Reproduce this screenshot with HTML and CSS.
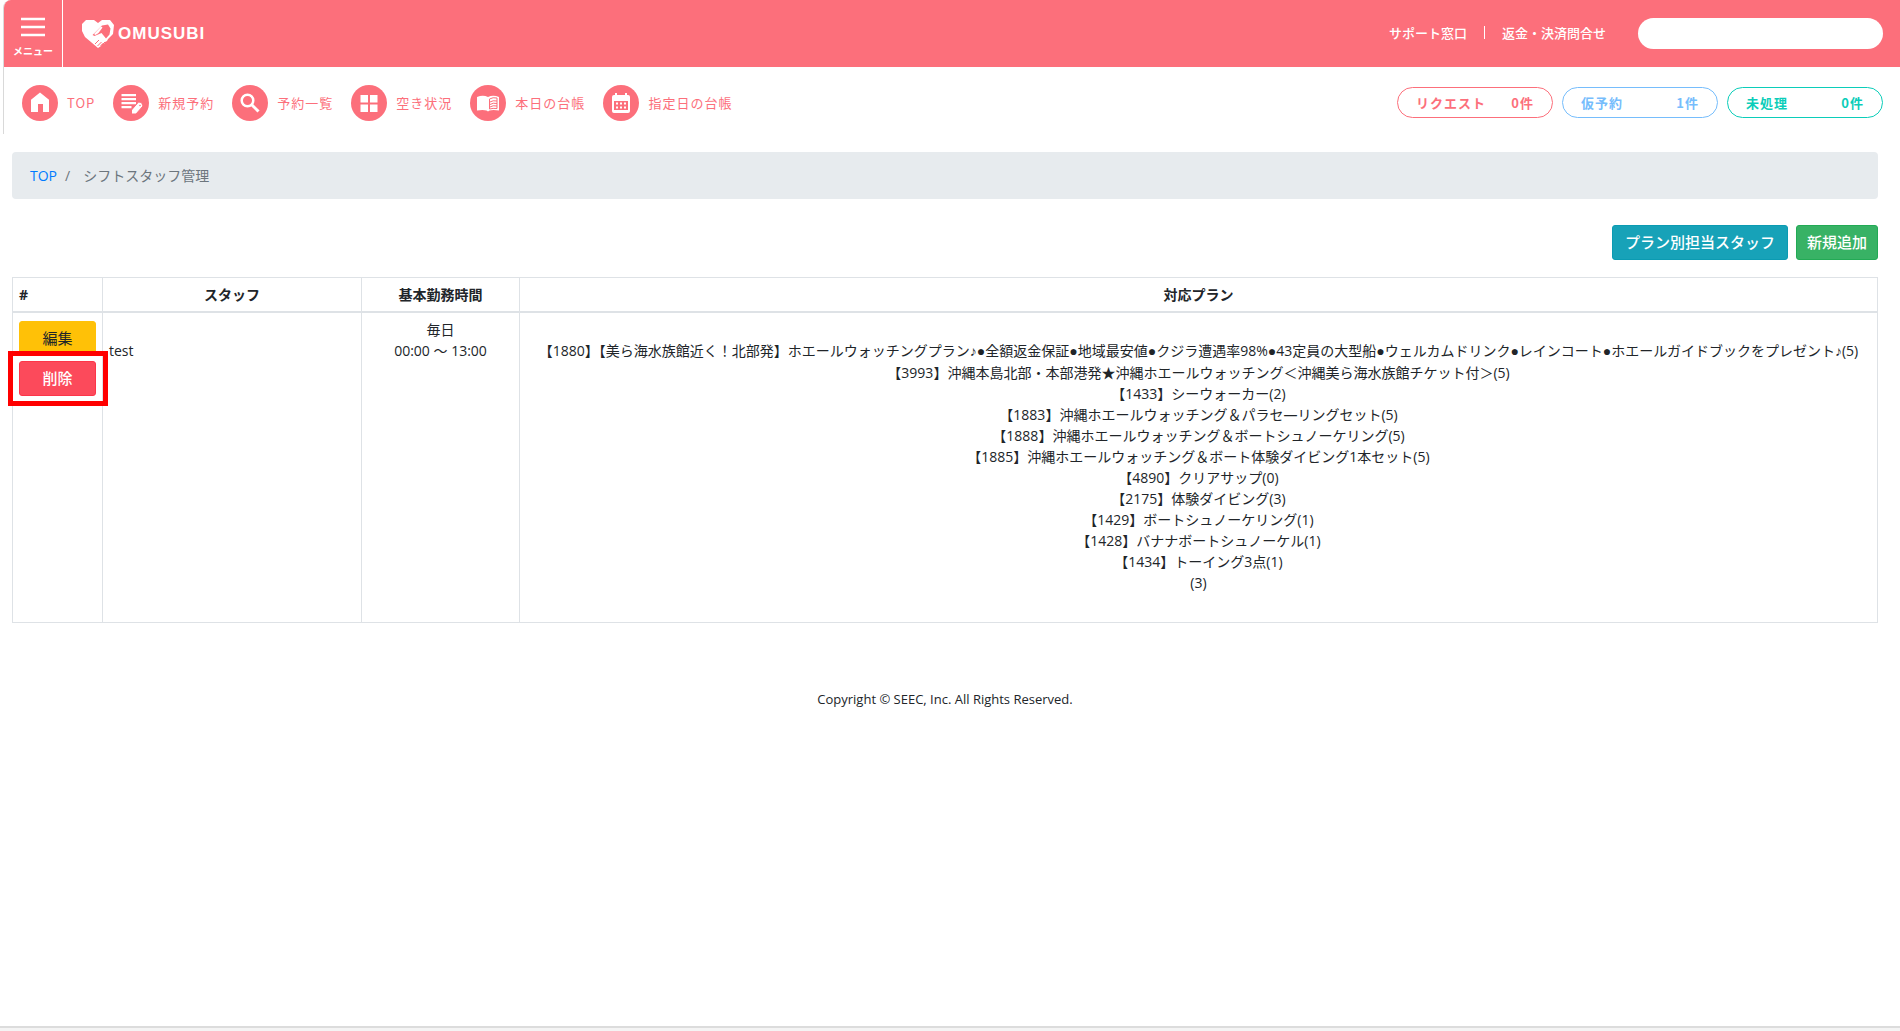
FILE: index.html
```html
<!DOCTYPE html>
<html lang="ja">
<head>
<meta charset="utf-8">
<title>シフトスタッフ管理 | OMUSUBI</title>
<link rel="stylesheet" href="styles.css">
</head>
<body>
<div class="top">
  <header class="header">
    <button class="menu" type="button">
      <svg class="menu-icon" width="24" height="20" viewBox="0 0 24 20" aria-hidden="true"><path d="M0 2h24M0 10h24M0 18h24" stroke="#fff" stroke-width="2.4"/></svg>
      <span>メニュー</span>
    </button>
    <a class="logo" href="#">
      <svg width="32" height="30" viewBox="0 0 32 30" aria-hidden="true">
        <path fill="#fff" d="M4 1l8 0 4 3 4-3 8 0 4 5-1 9-5 5-1 2-2 1-1 2-2 0-1 2-3 2L3 18 0 12 0 5z"/>
        <path fill="#fc6f7b" d="M20 6.500l6-1 2.500 4-1 6-3.500 4-4.500-5.500-3.500 1.500-3.500 1.500-2-1z"/>
        <path fill="#fff" d="M12 15l7-7.500 1.500 1-4 5.500-3 2z"/>
        <path fill="none" stroke="#fc6f7b" stroke-width="1" d="M13 25l4-4M15.500 27l4-4M18.500 27l3-3M21 25l2-2"/>
      </svg>
      <span>OMUSUBI</span>
    </a>
    <nav class="support">
      <a href="#">サポート窓口</a>
      <a href="#">返金・決済問合せ</a>
    </nav>
    <input class="search" type="search" aria-label="検索">
  </header>
  <div class="toolbar">
    <nav class="nav">
      <a href="#"><svg class="circle" viewBox="0 0 36 36" aria-hidden="true"><circle cx="18" cy="18" r="18"/><path class="w" d="M18 7.500l9 7.300V27h-6v-8h-5v8H9V14.800z"/></svg><span>TOP</span></a>
      <a href="#"><svg class="circle" viewBox="0 0 36 36" aria-hidden="true"><circle cx="18" cy="18" r="18"/><path class="w" d="M8.500 9h14.500v2.200H8.500zM8.500 13h14.500v2.200H8.500zM8.500 17h14.500v2.200H8.500zM8.500 21h10v2.200H8.500z"/><path class="w" stroke="#fc6f7b" d="M18.500 25l7-8 3 .5 1.500 3.500-7 8h-4.500z"/><circle cx="27" cy="20.500" r=".8"/></svg><span>新規予約</span></a>
      <a href="#"><svg class="circle" viewBox="0 0 36 36" aria-hidden="true"><circle cx="18" cy="18" r="18"/><g fill="none" stroke="#fff"><circle cx="15.500" cy="15.500" r="5.800" stroke-width="2.500" fill="none"/><path d="M19.500 19.500l7 7" stroke-width="3"/></g></svg><span>予約一覧</span></a>
      <a href="#"><svg class="circle" viewBox="0 0 36 36" aria-hidden="true"><circle cx="18" cy="18" r="18"/><path class="w" d="M9.500 10h7.500v7.500H9.500zM19 10h7.500v7.500H19zM9.500 19.500h7.500v7.500H9.500zM19 19.500h7.500v7.500H19z"/></svg><span>空き状況</span></a>
      <a href="#"><svg class="circle" viewBox="0 0 36 36" aria-hidden="true"><circle cx="18" cy="18" r="18"/><path class="w" d="M7 12q6-2.500 11 0 5-2.500 11 0v13.500q-6-1-9.500 0l-1.500 1-1.500-1q-3.500-1-9.500 0z"/><path fill="none" stroke="#fc6f7b" d="M19.500 14q3.500-2 7.500-1v10.500q-4-.5-7.500 .5zM20 17q3-2 7-1M20 19.500q3-2 7-1M20 22q3-2 7-1"/></svg><span>本日の台帳</span></a>
      <a href="#"><svg class="circle" viewBox="0 0 36 36" aria-hidden="true"><circle cx="18" cy="18" r="18"/><path class="w" fill-rule="evenodd" d="M9 12q0-2 2-2h1V8h2v2h8V8h2v2h1q2 0 2 2v14q0 2-2 2H11q-2 0-2-2zM11 16v9h14v-9z"/><path class="w" d="M13 17.500h2v2h-2zM17 17.500h2v2h-2zM21 17.500h2v2h-2zM13 21.500h2v2h-2zM17 21.500h2v2h-2zM21 21.500h2v2h-2z"/></svg><span>指定日の台帳</span></a>
    </nav>
    <div class="counts">
      <a class="pill pill-request" href="#"><span>リクエスト</span><span>0件</span></a>
      <a class="pill pill-hold" href="#"><span>仮予約</span><span>1件</span></a>
      <a class="pill pill-open" href="#"><span>未処理</span><span>0件</span></a>
    </div>
  </div>
</div>
<main class="main">
  <nav class="breadcrumb"><a href="#">TOP</a><span>/</span><span>シフトスタッフ管理</span></nav>
  <div class="actions">
    <button class="btn btn-info" type="button">プラン別担当スタッフ</button>
    <button class="btn btn-success" type="button">新規追加</button>
  </div>
  <table class="staff">
    <colgroup><col class="col-ops"><col class="col-name"><col class="col-time"><col></colgroup>
    <thead><tr><th class="left">#</th><th>スタッフ</th><th>基本勤務時間</th><th>対応プラン</th></tr></thead>
    <tbody><tr>
      <td class="left">
        <div class="ops">
          <button class="btn btn-warning" type="button">編集</button>
          <div class="marked"><button class="btn btn-danger" type="button">削除</button></div>
        </div>
      </td>
      <td class="left"><br>test</td>
      <td>毎日<br>00:00 ～ 13:00</td>
      <td class="plans"><br>
        【1880】【美ら海水族館近く！北部発】ホエールウォッチングプラン<span class="sym">♪●</span>全額返金保証<span class="sym">●</span>地域最安値<span class="sym">●</span>クジラ遭遇率98%<span class="sym">●</span>43定員の大型船<span class="sym">●</span>ウェルカムドリンク<span class="sym">●</span>レインコート<span class="sym">●</span>ホエールガイドブックをプレゼント<span class="sym">♪</span>(5)<br>
        【3993】沖縄本島北部・本部港発★沖縄ホエールウォッチング＜沖縄美ら海水族館チケット付＞(5)<br>
        【1433】シーウォーカー(2)<br>
        【1883】沖縄ホエールウォッチング＆パラセ―リングセット(5)<br>
        【1888】沖縄ホエールウォッチング＆ボートシュノーケリング(5)<br>
        【1885】沖縄ホエールウォッチング＆ボート体験ダイビング1本セット(5)<br>
        【4890】クリアサップ(0)<br>
        【2175】体験ダイビング(3)<br>
        【1429】ボートシュノーケリング(1)<br>
        【1428】バナナボートシュノーケル(1)<br>
        【1434】トーイング3点(1)<br>
        (3)<br><br>
      </td>
    </tr></tbody>
  </table>
</main>
<footer class="footer">Copyright © SEEC, Inc. All Rights Reserved.</footer>
<div class="bottom-edge"></div>
</body>
</html>
```
FILE: styles.css
```css
*, *::before, *::after { box-sizing: border-box; }
body {
  margin: 0;
  min-height: 100vh;
  display: flex;
  flex-direction: column;
  background: #fff;
  color: #212529;
  font: 14px/21px "Open Sans", "Noto Sans CJK JP", sans-serif;
}
a { text-decoration: none; }
button { font-family: inherit; cursor: pointer; }

.top {
  margin-left: 3px;
  border-left: 1px solid #d9d9d9;
  border-top-left-radius: 8px;
  overflow: hidden;
  font-family: "Noto Sans CJK JP", sans-serif;
}
.header {
  display: flex;
  align-items: center;
  height: 67px;
  padding-right: 17px;
  background: #fc6f7b;
}
.menu {
  display: flex;
  flex-direction: column;
  align-items: center;
  gap: 5px;
  align-self: stretch;
  width: 59px;
  padding: 17px 0 0;
  border: 0;
  border-right: 1px solid #fff;
  background: none;
  color: #fff;
  font-size: 10px;
  font-weight: 700;
  line-height: 18px;
}
.menu-icon { flex: none; }
.logo {
  display: flex;
  align-items: center;
  gap: 4px;
  margin-left: 19px;
  color: #fff;
  font: 700 17px/30px "Liberation Sans", sans-serif;
  letter-spacing: 1px;
}
.support {
  display: flex;
  margin-left: auto;
  padding-bottom: 2px;
  font-size: 13px;
  font-weight: 500;
  line-height: 13px;
}
.support a { color: #fff; }
.support a + a { margin-left: 17px; padding-left: 17px; border-left: 1px solid #fff; }
.search {
  width: 245px;
  height: 31px;
  margin-left: 32px;
  padding: 0 16px;
  border: 0;
  border-radius: 16px;
  background: #fff;
}
.toolbar {
  display: flex;
  justify-content: space-between;
  align-items: flex-start;
  height: 67px;
  padding: 18px 17px 0 18px;
}
.nav { display: flex; gap: 18px; }
.nav a {
  display: flex;
  align-items: center;
  gap: 9px;
  color: #fc6f7b;
  font-size: 13px;
  letter-spacing: 1px;
}
.nav span { padding-bottom: 2px; }
.circle { width: 36px; height: 36px; fill: #fc6f7b; }
.w { fill: #fff; }
.counts { display: flex; gap: 9px; padding-top: 2px; }
.pill {
  display: flex;
  justify-content: space-between;
  align-items: center;
  width: 156px;
  height: 31px;
  padding: 0 18px;
  border: 1px solid;
  border-radius: 16px;
  font-size: 13px;
  font-weight: 700;
  letter-spacing: 1px;
}
.pill-request { color: #fc6f7b; }
.pill-hold { color: #76bdfc; }
.pill-open { color: #0bcdb9; }

.main { padding: 18px 22px 0 12px; }
.breadcrumb {
  display: flex;
  gap: 8px;
  padding: 13px 18px;
  border-radius: 4px;
  background: #e7ebee;
  color: #6c757d;
}
.breadcrumb a { color: #007bff; }
.breadcrumb span + span { margin-left: 5px; }
.actions {
  display: flex;
  justify-content: flex-end;
  gap: 8px;
  margin: 26px 0 17px;
}
.btn {
  height: 35px;
  padding: 0 10px 1px;
  border: 1px solid;
  border-radius: 3px;
  color: #fff;
  font-size: 15px;
  line-height: 24px;
}
.btn-info { padding-inline: 12px; background: #17a2b8; border-color: #0b9bb2; font-weight: 500; }
.btn-success { background: #38b265; border-color: #22aa55; font-weight: 500; }
.btn-warning { background: #ffc107; border-color: #ffc107; color: #212529; }
.btn-danger { width: 100%; background: #fc4a5b; border-color: #fd3549; font-weight: 500; }

.staff {
  width: 100%;
  table-layout: fixed;
  border-collapse: collapse;
}
.col-ops { width: 90px; }
.col-name { width: 259px; }
.col-time { width: 158px; }
.staff th, .staff td {
  padding: 6px;
  border: 1px solid #dee2e6;
  text-align: center;
  vertical-align: top;
}
.staff th { border-bottom-width: 2px; font-weight: 700; }
.staff td { padding: 6px 6px 8px; }
.staff .left { text-align: left; }
.sym { font-family: "Liberation Sans", sans-serif; }
.ops { display: flex; flex-direction: column; gap: 5px; padding-top: 2px; }
.marked { position: relative; }
.marked::after {
  content: "";
  position: absolute;
  inset: -10px -12px -10px -11px;
  border: 5px solid #f00;
  pointer-events: none;
}
.footer { margin-top: 66px; padding-right: 10px; font-size: 13px; text-align: center; }
.bottom-edge { height: 5px; margin-top: auto; border-top: 2px solid #dcdcdc; background: #f4f4f4; }
```
